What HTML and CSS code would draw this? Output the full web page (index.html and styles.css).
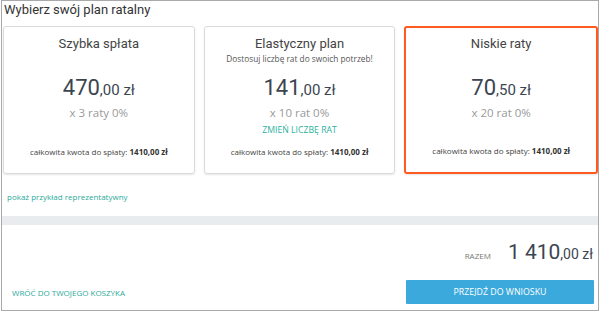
FILE: index.html
```html
<!DOCTYPE html>
<html lang="pl">
<head>
  <meta charset="UTF-8" />
  <title>Wybierz swój plan ratalny</title>
  <link rel="stylesheet" href="styles.css">
</head>
<body>
  <div class="frame">
    <h1 class="title">Wybierz swój plan ratalny</h1>

    <div class="plans">
      <div class="plan">
        <div class="plan-name">Szybka spłata</div>
        <div class="plan-note"></div>
        <div class="price">470<small>,00 zł</small></div>
        <div class="per">x 3 raty 0%</div>
        <div class="total">całkowita kwota do spłaty: <b>1410,00 zł</b></div>
      </div>
      <div class="plan">
        <div class="plan-name">Elastyczny plan</div>
        <div class="plan-note">Dostosuj liczbę rat do swoich potrzeb!</div>
        <div class="price">141<small>,00 zł</small></div>
        <div class="per">x 10 rat 0%</div>
        <a class="change" href="#">ZMIEŃ LICZBĘ RAT</a>
        <div class="total">całkowita kwota do spłaty: <b>1410,00 zł</b></div>
      </div>
      <div class="plan selected">
        <div class="plan-name">Niskie raty</div>
        <div class="plan-note"></div>
        <div class="price">70<small>,50 zł</small></div>
        <div class="per">x 20 rat 0%</div>
        <div class="total">całkowita kwota do spłaty: <b>1410,00 zł</b></div>
      </div>
    </div>

    <a class="example" href="#">pokaż przykład reprezentatywny</a>

    <div class="band"></div>

    <div class="summary">
      <div class="sum-row">
        <span class="sum-label">RAZEM</span>
        <span class="sum-value">1 410<small>,00 zł</small></span>
      </div>
      <div class="actions">
        <a class="back" href="#">WRÓĆ DO TWOJEGO KOSZYKA</a>
        <button class="next">PRZEJDŹ DO WNIOSKU</button>
      </div>
    </div>
  </div>
</body>
</html>
```

FILE: styles.css
```css
body { margin: 0; background: #fff; font-family: "Open Sans", sans-serif; color: #3b4550; }
a { text-decoration: none; }

.frame { margin-left: 1px; width: 598px; height: 311px; box-sizing: border-box; border: 1px solid #a9a9a9; }
.title { margin: 0; padding-left: 2px; font: 400 13px/18px Roboto, sans-serif; color: #333; }

.plans { display: flex; gap: 9px; padding-left: 1px; margin-top: 7px; }
.plan { flex: 1; height: 148px; box-sizing: border-box; border: 1px solid #dadada; border-radius: 3px; box-shadow: 0 1px 2px rgba(0,0,0,0.1); display: flex; flex-direction: column; align-items: center; text-align: center; }
.plan.selected { border: 2px solid #ff5a1f; }
.plan.selected .plan-name { margin-top: 8px; }

.plan-name { margin-top: 9px; font: 400 13px/16px Roboto, sans-serif; color: #444; }
.plan-note { height: 12px; margin-top: 1px; font-size: 8.3px; line-height: 12px; color: #555; }
.price { margin-top: 10px; font: 400 22px/26px Roboto, sans-serif; color: #3b4550; }
.price small { font-size: 15px; }
.per { margin-top: 3px; font-size: 11.5px; line-height: 14px; color: #9a9a9a; }
.change { margin-top: 3px; font-size: 8.7px; line-height: 14px; color: #2db3a0; }
.total { margin-top: auto; margin-bottom: 15px; font-size: 8px; line-height: 12px; color: #444; }
.total b { font-weight: 700; color: #333; }

.example { display: block; margin-top: 16px; padding-left: 5px; font-size: 8px; line-height: 14px; color: #2bab9b; }

.band { height: 9px; margin-top: 12px; background: #e9ecef; }

.summary { padding: 0 4px 0 10px; }
.sum-row { display: flex; justify-content: flex-end; align-items: baseline; gap: 17px; margin-top: 14px; padding-right: 1px; }
.sum-label { font-size: 8px; color: #777; }
.sum-value { font: 400 21px/26px Roboto, sans-serif; color: #3b4550; }
.sum-value small { font-size: 14px; }

.actions { display: flex; justify-content: space-between; align-items: center; margin-top: 13px; }
.back { font-size: 8px; color: #2bab9b; }
.next { width: 188px; height: 24px; border: 0; border-radius: 1px; background: #3ba9dc; color: #fff; font-family: "Open Sans", sans-serif; font-size: 8.8px; cursor: pointer; }
```
